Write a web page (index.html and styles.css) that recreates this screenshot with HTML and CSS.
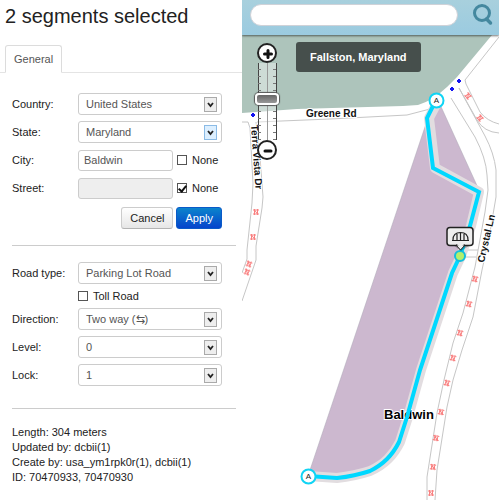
FILE: index.html
```
<!DOCTYPE html>
<html lang="en">
<head>
    <meta charset="UTF-8">
    <meta name="viewport" content="width=device-width, initial-scale=1.0">
    <title>Map Editor</title>
    <link rel="stylesheet" href="styles.css">
</head>
<body>
    <svg class="defs" width="0" height="0" aria-hidden="true">
        <symbol id="arrow" viewBox="0 0 13 15">
            <rect class="arrow-box" x="0.5" y="0.5" width="12" height="14"/>
            <path d="M4 6l2.500 3L9 6" fill="none" stroke="#222" stroke-width="1.800"/>
        </symbol>
    </svg>

    <div class="sidebar">
        <h1>2 segments selected</h1>
        <div class="tabs">
            <button class="tab" type="button">General</button>
        </div>
        <form class="panel">
            <div class="group">
                <div class="row">
                    <label for="country">Country:</label>
                    <div class="select">
                        <select id="country"><option>United States</option></select>
                        <svg class="arrow"><use href="#arrow"/></svg>
                    </div>
                </div>
                <div class="row">
                    <label for="state">State:</label>
                    <div class="select">
                        <select id="state"><option>Maryland</option></select>
                        <svg class="arrow active"><use href="#arrow"/></svg>
                    </div>
                </div>
                <div class="row">
                    <label for="city">City:</label>
                    <input class="text" id="city" type="text" value="Baldwin">
                    <label class="check"><input type="checkbox">None</label>
                </div>
                <div class="row">
                    <label for="street">Street:</label>
                    <input class="text" id="street" type="text" disabled>
                    <label class="check"><input type="checkbox" checked>None</label>
                </div>
                <div class="buttons">
                    <button class="btn" type="button">Cancel</button>
                    <button class="btn primary" type="button">Apply</button>
                </div>
            </div>
            <div class="group">
                <div class="row">
                    <label for="road">Road type:</label>
                    <div class="select">
                        <select id="road"><option>Parking Lot Road</option></select>
                        <svg class="arrow"><use href="#arrow"/></svg>
                    </div>
                </div>
                <label class="check toll"><input type="checkbox">Toll Road</label>
                <div class="row">
                    <label for="direction">Direction:</label>
                    <div class="select">
                        <select id="direction"><option>Two way (⇆)</option></select>
                        <svg class="arrow"><use href="#arrow"/></svg>
                    </div>
                </div>
                <div class="row">
                    <label for="level">Level:</label>
                    <div class="select">
                        <select id="level"><option>0</option></select>
                        <svg class="arrow"><use href="#arrow"/></svg>
                    </div>
                </div>
                <div class="row">
                    <label for="lock">Lock:</label>
                    <div class="select">
                        <select id="lock"><option>1</option></select>
                        <svg class="arrow"><use href="#arrow"/></svg>
                    </div>
                </div>
            </div>
            <ul class="info">
                <li>Length: 304 meters</li>
                <li>Updated by: dcbii(1)</li>
                <li>Create by: usa_ym1rpk0r(1), dcbii(1)</li>
                <li>ID: 70470933, 70470930</li>
            </ul>
        </form>
    </div>

    <div class="main">
        <div class="search-bar">
            <input class="search" type="search" aria-label="Search">
            <button class="search-button" type="button" aria-label="Search">
                <svg width="22" height="22" viewBox="0 0 22 22">
                    <circle cx="10" cy="9" r="7.500" fill="none" stroke="#44889f" stroke-width="3"/>
                    <path d="M14.500 15l4 4" stroke="#44889f" stroke-width="3.500" stroke-linecap="round"/>
                </svg>
            </button>
        </div>
        <div class="map">
            <svg class="tiles" viewBox="242 35 257 465" preserveAspectRatio="xMinYMin slice">
                <defs>
                    <path id="cross" d="M-1.500-3v6M1.500-3v6M-3-2h6M-3 2h6M-1.500-2l3 4"/>
                </defs>
                <!-- park -->
                <path fill="#adc4bb" d="M242 35H492L457 77L447 87Q432 101 418 105L403 106L297 109L242 113Z"/>
                <!-- road outlines -->
                <g fill="none" stroke="#c6c6c6" stroke-width="1">
                    <path d="M257 122L330 119L407 115L430 109"/>
                    <path d="M242 122h6l2 6L253 183L252 203L247 250L247 259L242 273"/>
                    <path d="M256 122L260 157L263 197L262 208L256 246V260L242 301"/>
                    <path d="M499 37L465 80L466 84L480 112Q487 121 499 124"/>
                    <path d="M459 88L477 120Q484 132 499 133"/>
                    <path d="M451 98L475 137Q486 158 487 175L488 190L485 212L475 267L463 313L453 343L444 380L437 413L427 477V500"/>
                    <path d="M459 88L485 136Q494 153 496 170V197L489 238L482 270L473 317L462 350L453 380L447 407L437 470L435 500"/>
                    <path d="M466 250H478M466 257H476"/>
                </g>
                <g fill="none" stroke="#f98080" stroke-width="1">
                    <use href="#cross" transform="translate(468 96) rotate(50)"/>
                    <use href="#cross" transform="translate(480 118) rotate(50)"/>
                    <use href="#cross" x="256" y="212"/>
                    <use href="#cross" x="253" y="237"/>
                    <use href="#cross" transform="translate(249 264) rotate(20)"/>
                    <use href="#cross" transform="translate(247 272) rotate(20)"/>
                    <use href="#cross" transform="translate(475 279) rotate(15)"/>
                    <use href="#cross" transform="translate(469 304) rotate(15)"/>
                    <use href="#cross" transform="translate(460 333) rotate(15)"/>
                    <use href="#cross" transform="translate(453 358) rotate(15)"/>
                    <use href="#cross" transform="translate(447 383) rotate(15)"/>
                    <use href="#cross" transform="translate(441 412) rotate(10)"/>
                    <use href="#cross" transform="translate(436 438) rotate(10)"/>
                    <use href="#cross" transform="translate(433 467) rotate(5)"/>
                    <use href="#cross" x="431" y="493"/>
                </g>
                <path stroke="#1313f0" stroke-width="2" d="M457 81h4M459 79v4M450 89h4M452 87v4M251 115h4M253 113v4"/>
                <!-- parking lot -->
                <path fill="#ccb8cf" stroke="#aaa6b4" stroke-width="0.500" d="M434 100H438L479 190L470 226L448 283L418 380L407 417L399 442L387 459L370 471L337 478L308 476Z"/>
                <path class="halo" d="M438 101L429 118L435 168L479 192L471 226L461 256L453 273L421 370L408 417L400 442Q395 452 388 459Q381 466 370 471Q355 476 337 478L308 476"/>
                <text class="place" x="384" y="419">Baldwin</text>
                <path class="segment" d="M436 100L427 118L433 168L479 192L470 226L460 256L452 273L420 370L407 417L399 442Q394 452 387 459Q380 466 370 471Q355 476 337 478L308 476"/>
                <text class="street" x="306" y="117">Greene Rd</text>
                <text class="street" transform="translate(251 125) rotate(86)">Terra Vista Dr</text>
                <text class="street" transform="translate(484 263) rotate(-77)">Crystal Ln</text>
                <g class="node">
                    <circle cx="436.500" cy="100.500" r="7"/>
                    <text x="436.500" y="103">A</text>
                    <circle cx="308.500" cy="476.500" r="7"/>
                    <text x="308.500" y="479">A</text>
                </g>
                <circle cx="460" cy="256" r="5" fill="#b4f06c" stroke="#12bfdc" stroke-width="2"/>
                <!-- bridge marker -->
                <path fill="#0004" d="M452 244h20l-11 7Z"/>
                <rect x="447" y="227.500" width="26" height="18" rx="3" fill="#eee" stroke="#222" stroke-width="1.500"/>
                <path d="M456 245h9l-4.500 5Z" fill="#eee" stroke="#222" stroke-width="1"/>
                <path d="M457 244h7l-3.500 4Z" fill="#eee"/>
                <path fill="none" stroke="#222" stroke-width="1.200" d="M452 240.500h17M453 240C453 235 456 232.500 460.500 232.500S468 235 468 240M457 234v6M460.500 232.500v8M464 234v6"/>
            </svg>
            <div class="location">Fallston, Maryland</div>
            <div class="zoom">
                <button class="zoom-button" type="button" aria-label="Zoom in">
                    <svg width="18" height="18" viewBox="0 0 18 18"><path d="M9 5.500v7M5.500 9h7" stroke="#111" stroke-width="3" stroke-linecap="round"/></svg>
                </button>
                <input class="slider" type="range" min="0" max="24" value="13" aria-label="Zoom level">
                <button class="zoom-button" type="button" aria-label="Zoom out">
                    <svg width="18" height="18" viewBox="0 0 18 18"><path d="M6 9h6" stroke="#111" stroke-width="3" stroke-linecap="round"/></svg>
                </button>
            </div>
        </div>
    </div>
</body>
</html>
```

FILE: styles.css
```
* {
    box-sizing: border-box;
}
body {
    display: flex;
    min-height: 100vh;
    margin: 0;
    font-family: "Liberation Sans", Arial, sans-serif;
    font-size: 11px;
    color: #222;
    background-color: #fff;
}
button, input, select {
    margin: 0;
    font: inherit;
    color: inherit;
}
.defs {
    position: absolute;
}
.sidebar {
    flex: 0 0 242px;
}
h1 {
    margin: 4px 0 17px 5px;
    font-size: 20px;
    font-weight: normal;
    line-height: 24px;
}
.tabs {
    display: flex;
    padding-left: 5px;
    border-bottom: 1px solid #e4e4e4;
}
.tab {
    height: 28px;
    margin-bottom: -1px;
    padding: 0 8px;
    border: 1px solid #dcdcdc;
    border-bottom-color: #fff;
    border-radius: 3px 3px 0 0;
    color: #555;
    background-color: #fff;
}
.panel {
    padding: 20px 6px 0 12px;
}
.group {
    display: flex;
    flex-direction: column;
    gap: 6px;
    margin-bottom: 16px;
    padding-bottom: 16px;
    border-bottom: 1px solid #ccc;
}
.group + .group {
    padding-bottom: 22px;
}
.row {
    display: grid;
    grid-template-columns: 66px 95px 1fr;
    align-items: center;
    height: 22px;
}
.select {
    position: relative;
    grid-column: 2 / 4;
    margin-right: 14px;
}
select, .text {
    width: 100%;
    height: 22px;
    padding: 0 7px;
    border: 1px solid #ccc;
    border-radius: 3px;
    color: #555;
    background-color: #fff;
}
select {
    display: block;
    appearance: none;
}
.text {
    height: 21px;
    padding: 0 5px;
}
.text:disabled {
    background-color: #eee;
}
.arrow {
    position: absolute;
    top: 4px;
    right: 5px;
    width: 13px;
    height: 15px;
    fill: #eee;
    stroke: #aaa;
    pointer-events: none;
}
.arrow.active {
    fill: #dcefff;
    stroke: #8bbbe6;
}
.check {
    display: flex;
    align-items: center;
    gap: 5px;
    padding-left: 4px;
}
.check input {
    display: grid;
    place-items: center;
    appearance: none;
    width: 10px;
    height: 10px;
    border: 1px solid #555;
    background-color: #fff;
}
.check input:checked::after {
    content: "";
    width: 3px;
    height: 6px;
    border: solid #111;
    border-width: 0 2px 2px 0;
    transform: rotate(40deg);
}
.toll {
    height: 12px;
    padding-left: 66px;
}
.buttons {
    display: flex;
    justify-content: flex-end;
    gap: 3px;
    margin: 2px 14px 0 0;
}
.btn {
    height: 22px;
    padding: 0 8px;
    border: 1px solid #ccc;
    border-bottom-color: #b3b3b3;
    border-radius: 3px;
    background: linear-gradient(#fff, #e6e6e6);
}
.primary {
    border-color: #0a5ac8;
    color: #fff;
    background: linear-gradient(#0b84cc, #0544cc);
}
.info {
    margin: 0;
    padding: 0;
    line-height: 15px;
    list-style: none;
}
.main {
    display: flex;
    flex: 1;
    flex-direction: column;
    min-width: 0;
}
.search-bar {
    display: flex;
    align-items: flex-start;
    gap: 14px;
    height: 35px;
    padding: 4px 5px 0 8px;
    background: linear-gradient(#a8d0dd, #9bcbe0);
    box-shadow: 0 1px 2px #0008;
    clip-path: inset(0 0 -4px 0);
    z-index: 1;
}
.search {
    flex: 1;
    min-width: 0;
    height: 22px;
    padding: 0 10px;
    border: 1px solid #cfd2d8;
    border-radius: 11px;
    background-color: #fff;
}
.search-button {
    padding: 0;
    border: 0;
    background: none;
    line-height: 0;
}
.map {
    position: relative;
    flex: 1;
    overflow: hidden;
}
.tiles {
    position: absolute;
    width: 100%;
    height: 100%;
}
.halo, .segment {
    fill: none;
    stroke: #e2dde0;
    stroke-width: 10px;
    stroke-linejoin: round;
}
.segment {
    stroke: #00d8ff;
    stroke-width: 4px;
    stroke-linejoin: miter;
}
.street, .place {
    font-size: 10px;
    font-weight: bold;
    fill: #111;
    stroke: #fff;
    stroke-width: 2px;
    paint-order: stroke;
}
.place {
    font-size: 13px;
    fill: #000;
}
.node {
    fill: #fff;
    stroke: #10d4f4;
    stroke-width: 2px;
}
.node text {
    font-size: 8px;
    text-anchor: middle;
    fill: #222;
    stroke: none;
}
.location {
    position: absolute;
    top: 7px;
    left: 54px;
    padding: 0 14px;
    border-radius: 3px;
    font-weight: bold;
    line-height: 30px;
    color: #fff;
    background-color: #464f4c;
}
.zoom {
    position: absolute;
    top: 8px;
    left: 13px;
    display: flex;
    flex-direction: column;
    align-items: center;
    width: 24px;
}
.zoom-button {
    z-index: 1;
    display: grid;
    place-items: center;
    width: 20px;
    height: 20px;
    padding: 0;
    border: 2px solid #222;
    border-radius: 50%;
    background-color: #fff;
}
.slider {
    appearance: none;
    writing-mode: vertical-lr;
    direction: rtl;
    width: 24px;
    height: 77px;
    background:
        repeating-linear-gradient(transparent 0 6px, #777 6px 7px) 3px 0 / 3px 100% no-repeat,
        repeating-linear-gradient(transparent 0 6px, #777 6px 7px) 18px 0 / 3px 100% no-repeat,
        linear-gradient(90deg, #444 1px, #fff6 1px 9px, #999 9px 10px, #fff6 10px 18px, #444 18px) 3px 0 / 19px 100% no-repeat;
}
.slider::-webkit-slider-thumb {
    appearance: none;
    width: 24px;
    height: 12px;
    border: 2px solid #fff;
    border-radius: 4px;
    background: linear-gradient(#666, #999);
    box-shadow: 0 0 1px 1px #555;
}
```
